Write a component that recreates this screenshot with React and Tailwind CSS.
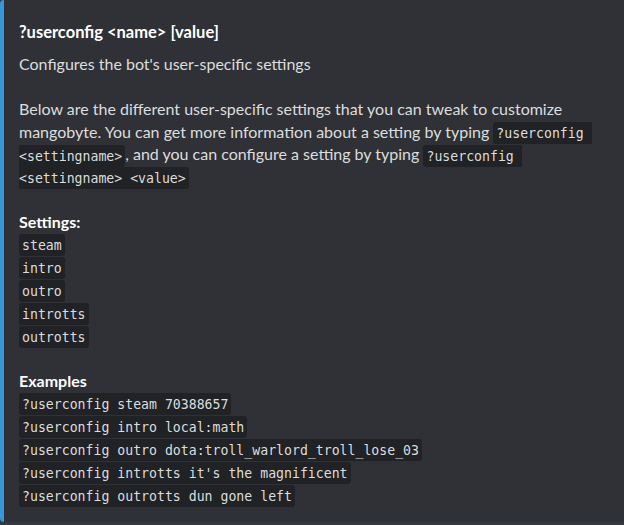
import React from "react";

const Code = ({ children }) => (
    <code className="font-['DejaVu_Sans_Mono',monospace] text-[13.2px] leading-[16px] bg-[#202225] text-[#dcddde] rounded-[3px] px-[3px] py-[3.5px] whitespace-pre-wrap">
        {children}
    </code>
);

const settings = ["steam", "intro", "outro", "introtts", "outrotts"];

const examples = [
    "?userconfig steam 70388657",
    "?userconfig intro local:math",
    "?userconfig outro dota:troll_warlord_troll_lose_03",
    "?userconfig introtts it's the magnificent",
    "?userconfig outrotts dun gone left",
];

export default function App() {
    return (
        <div className="w-[624px] h-[525px] overflow-hidden bg-[#36393f] font-['Lato',sans-serif]">
            <div className="w-[660px] h-[522px] bg-[#2f3136] border-l-[4px] border-[#3498db] rounded-[4px] pl-[15px] pt-[21px]">
                <div className="w-[590px]">
                    {/* title */}
                    <h2 className="text-white font-bold text-[16.5px] leading-[22px]">
                        ?userconfig &lt;name&gt; [value]
                    </h2>

                    {/* description */}
                    <div className="mt-[10px] text-[#dcddde] text-[16px] leading-[22.6px]">
                        <div>Configures the bot's user-specific settings</div>
                        <div className="h-[22.6px]" />
                        <p>
                            Below are the different user-specific settings that you can tweak to customize
                            mangobyte. You can get more information about a setting by typing{" "}
                            <Code>?userconfig &lt;settingname&gt;</Code>, and you can configure a setting by typing{" "}
                            <Code>?userconfig &lt;settingname&gt; &lt;value&gt;</Code>
                        </p>
                        <div className="h-[22px]" />

                        <div className="font-bold text-white">Settings:</div>
                        <div className="-mt-[2px] leading-[23.2px]">
                            {settings.map((s) => (
                                <div key={s}>
                                    <Code>{s}</Code>
                                </div>
                            ))}
                        </div>
                        <div className="h-[22.6px]" />

                        <div className="font-bold text-white">Examples</div>
                        <div className="-mt-[1.5px] leading-[23px]">
                            {examples.map((e) => (
                                <div key={e}>
                                    <Code>{e}</Code>
                                </div>
                            ))}
                        </div>
                    </div>
                </div>
            </div>
        </div>
    );
}
